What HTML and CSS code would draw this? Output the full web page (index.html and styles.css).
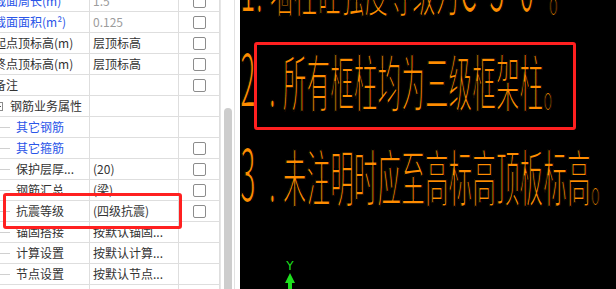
FILE: index.html
```html
<!DOCTYPE html>
<html lang="zh-CN">
<head>
<meta charset="utf-8">
<title>属性</title>
<link rel="stylesheet" href="styles.css">
</head>
<body>
<div class="app">
  <div class="panel">
    <div class="grid">
      <div class="table">
        <div class="row"><div class="c1 blue">截面周长(m)</div><div class="c2 gray">1.5</div><div class="c3"><span class="cb"></span></div></div>
        <div class="row"><div class="c1 blue">截面面积(m²)</div><div class="c2 gray">0.125</div><div class="c3"><span class="cb"></span></div></div>
        <div class="row"><div class="c1">起点顶标高(m)</div><div class="c2">层顶标高</div><div class="c3"><span class="cb"></span></div></div>
        <div class="row"><div class="c1">终点顶标高(m)</div><div class="c2">层顶标高</div><div class="c3"><span class="cb"></span></div></div>
        <div class="row"><div class="c1">备注</div><div class="c2"></div><div class="c3"><span class="cb"></span></div></div>
        <div class="row"><div class="c1 group"><span class="toggle"></span>钢筋业务属性</div><div class="c2"></div><div class="c3"></div></div>
        <div class="row"><div class="c1 child"><span class="branch"></span><span class="blue">其它钢筋</span></div><div class="c2"></div><div class="c3"></div></div>
        <div class="row"><div class="c1 child"><span class="branch"></span><span class="blue">其它箍筋</span></div><div class="c2"></div><div class="c3"><span class="cb"></span></div></div>
        <div class="row"><div class="c1 child"><span class="branch"></span>保护层厚...</div><div class="c2">(20)</div><div class="c3"><span class="cb"></span></div></div>
        <div class="row"><div class="c1 child"><span class="branch"></span>钢筋汇总</div><div class="c2">(梁)</div><div class="c3"><span class="cb"></span></div></div>
        <div class="row"><div class="c1 child"><span class="branch"></span>抗震等级</div><div class="c2">(四级抗震)</div><div class="c3"><span class="cb"></span></div></div>
        <div class="row"><div class="c1 child"><span class="branch"></span>锚固搭接</div><div class="c2">按默认锚固...</div><div class="c3"></div></div>
        <div class="row"><div class="c1 child"><span class="branch"></span>计算设置</div><div class="c2">按默认计算...</div><div class="c3"></div></div>
        <div class="row"><div class="c1 child"><span class="branch"></span>节点设置</div><div class="c2">按默认节点...</div><div class="c3"></div></div>
        <div class="row"><div class="c1"></div><div class="c2"></div><div class="c3"></div></div>
      </div>
    </div>
    <div class="scroll"><div class="thumb"></div></div>
    <div class="gap"></div>
  </div>
  <div class="canvas">
    <div class="cad line1"><span class="n n1">1</span><span class="d">.</span>墙柱砼强度等级为<span class="n w">C</span><span class="n w">3</span><span class="n w">0</span>。</div>
    <div class="cad line2"><span class="n">2</span><span class="d">.</span>所有框柱均为三级框架柱。</div>
    <div class="cad line3"><span class="n">3</span><span class="d">.</span>未注明时应至高标高顶板标高。</div>
    <div class="axis">
      <span class="axis-label">Y</span>
      <svg class="arrow" width="12" height="17" viewBox="0 0 12 17"><polygon points="6,0 11,10 8,10 8,17 4,17 4,10 1,10" fill="#1ee01e"/></svg>
    </div>
  </div>
  <div class="mark mark-left"></div>
  <div class="mark mark-right"></div>
</div>
</body>
</html>
```
FILE: styles.css
```css
html, body {
  margin: 0;
  padding: 0;
  background: #fff;
}
.app {
  position: relative;
  display: flex;
  width: 616px;
  height: 289px;
  overflow: hidden;
  font-family: "Noto Sans CJK SC", "Noto Sans", sans-serif;
  font-size: 12px;
  color: #333;
}
.panel {
  display: flex;
  width: 240px;
  flex: none;
  background: #fff;
}
.grid {
  width: 220px;
  overflow: hidden;
}
.table {
  width: 230px;
  margin-left: -10px;
  margin-top: -9px;
}
.row {
  display: grid;
  grid-template-columns: 100px 89px 41px;
  height: 21px;
  box-sizing: border-box;
  border-bottom: 1px solid #dedede;
}
.row > div {
  border-right: 1px solid #dedede;
  line-height: 20px;
  white-space: nowrap;
  overflow: hidden;
}
.c1 {
  padding-left: 4px;
}
.c2 {
  padding-left: 3px;
}
.c3 {
  display: flex;
  align-items: center;
  justify-content: center;
}
.blue {
  color: #2a55e8;
}
.gray {
  color: #9c9c9c;
}
.cb {
  width: 11px;
  height: 11px;
  border: 1px solid #8c8c8c;
  border-radius: 2px;
  background: #fff;
}
.group, .child {
  display: flex;
  align-items: center;
}
.toggle {
  position: relative;
  width: 7px;
  height: 7px;
  border: 1px solid #8c8c8c;
  margin-right: 7px;
  flex: none;
}
.toggle::after {
  content: "";
  position: absolute;
  left: 1px;
  right: 1px;
  top: 3px;
  height: 1px;
  background: #555;
}
.child {
  padding-left: 6px;
}
.branch {
  width: 14px;
  height: 1px;
  background: #d0d0d0;
  margin-right: 6px;
  flex: none;
}
.scroll {
  width: 15px;
  flex: none;
  display: flex;
  flex-direction: column;
  padding-top: 108px;
  box-sizing: border-box;
  border-right: 1px solid #e2e2e2;
  border-left: 1px solid #e6e6e6;
}
.thumb {
  flex: 1;
  width: 8px;
  margin-left: 3px;
  background: #cdcdcd;
  border-radius: 4px 4px 0 0;
}
.gap {
  flex: 1;
}
.canvas {
  position: relative;
  flex: 1;
  background: #000;
  overflow: hidden;
}
.cad {
  position: absolute;
  left: 0;
  white-space: nowrap;
  font-size: 62px;
  line-height: 80px;
  color: #ff8c00;
  -webkit-text-stroke: 2.1px #000;
  transform: scaleX(0.382);
  transform-origin: 0 0;
}
.cad .n {
  display: inline-block;
  width: 76px;
  font-size: 74px;
}
.cad .n1 {
  width: 42px;
}
.cad .w {
  width: 78px;
}
.cad .d {
  display: inline-block;
  width: 36px;
}
.line1 {
  top: -60px;
}
.line2 {
  top: 35px;
}
.line3 {
  top: 130px;
}
.axis {
  position: absolute;
  left: 44px;
  top: 260px;
  width: 12px;
  display: flex;
  flex-direction: column;
  align-items: center;
}
.axis-label {
  font-family: "DejaVu Sans", sans-serif;
  font-size: 12px;
  line-height: 13px;
  color: #1ee01e;
}
.arrow {
  display: block;
}
.mark {
  position: absolute;
  border: 3px solid #ff2020;
  border-radius: 3px;
  box-sizing: border-box;
}
.mark-left {
  left: 3px;
  top: 193px;
  width: 179px;
  height: 36px;
}
.mark-right {
  left: 254px;
  top: 42px;
  width: 322px;
  height: 88px;
}
```
